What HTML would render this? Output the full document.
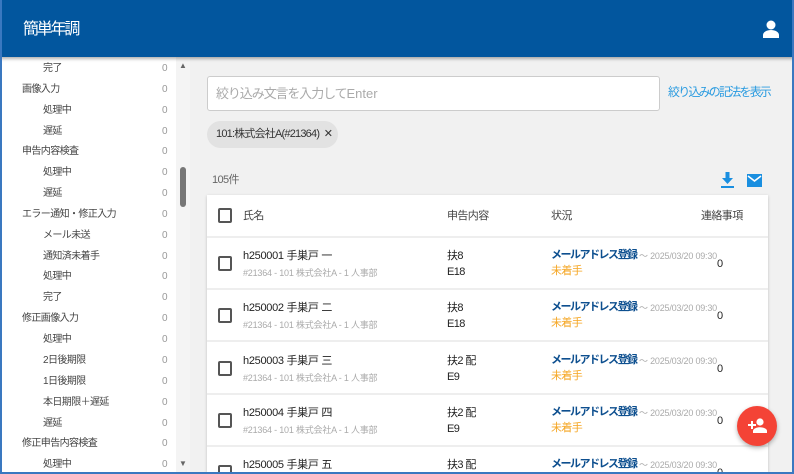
<!DOCTYPE html><html><head><meta charset="utf-8"><style>
*{box-sizing:border-box;margin:0;padding:0}
html,body{width:794px;height:474px;overflow:hidden}
body{font-family:"Liberation Sans","Noto Sans CJK JP",sans-serif;background:#f1f1f1;position:relative;letter-spacing:-0.6px;line-height:13px}
.frame{position:absolute;left:0;top:0;width:794px;height:474px;border:2px solid #3a78c0;border-top:none;pointer-events:none;z-index:20}
.hdr{position:absolute;left:0;top:0;width:794px;height:57px;background:#02569e;box-shadow:0 2px 3px rgba(0,0,0,.3);z-index:5}
.hdr .t{position:absolute;left:23px;top:21px;color:#fff;font-size:16px;letter-spacing:-2.2px;line-height:18px}
.side{position:absolute;left:0;top:57px;width:190px;height:415px;background:#fff;overflow:hidden}
.it{position:absolute;font-size:10px;color:#444;white-space:nowrap;line-height:12px}
.c{position:absolute;left:162px;font-size:10px;color:#999;line-height:12px}
.track{position:absolute;left:176px;top:57px;width:14px;height:415px;background:#f4f4f4}
.thumb{position:absolute;left:180px;top:167px;width:6px;height:40px;background:#777;border-radius:3px}
.ar{position:absolute;left:179px;font-size:8px;line-height:8px;color:#666}
.srch{position:absolute;left:207px;top:76px;width:453px;height:35px;background:#fff;border:1px solid #ccc;border-radius:3px;font-size:13px;color:#aaa;padding:10px 8px;letter-spacing:-1.1px;line-height:14px}
.srch span{letter-spacing:0}
.lnk{position:absolute;left:668px;top:86px;font-size:12px;color:#2a9be0;letter-spacing:-1.8px;white-space:nowrap}
.chip{position:absolute;left:207px;top:121px;width:131px;height:27px;background:#e2e2e2;border-radius:14px;font-size:11px;color:#333;padding:7px 9px;white-space:nowrap;letter-spacing:-0.8px}
.cnt{position:absolute;left:212px;top:174px;font-size:11px;color:#666}
.card{position:absolute;left:207px;top:195px;width:561px;height:277px;background:#fff;box-shadow:0 1px 3px rgba(0,0,0,.2);overflow:hidden}
.row{position:absolute;left:0;width:561px;border-bottom:2px solid #eee}
.cb{position:absolute;left:11px;width:14px;height:15px;border:2px solid #555;border-radius:2px}
.tx{position:absolute;white-space:nowrap;line-height:13px}
.fab{position:absolute;left:737px;top:406px;width:40px;height:40px;border-radius:50%;background:#f44336;box-shadow:0 2px 5px rgba(0,0,0,.3);z-index:10}
</style></head><body>
<div class="hdr"><div class="t">簡単年調</div>
<svg style="position:absolute;left:763px;top:20px" width="16" height="18" viewBox="0 0 16 18"><circle cx="8" cy="5" r="4.5" fill="#fff"/><path d="M0 18v-3c0-3 4-5 8-5s8 2 8 5v3z" fill="#fff"/></svg></div>
<div class="side">
<div class="it" style="left:43px;top:6px">完了</div><div class="c" style="top:6px">0</div>
<div class="it" style="left:22px;top:27px">画像入力</div><div class="c" style="top:27px">0</div>
<div class="it" style="left:43px;top:48px">処理中</div><div class="c" style="top:48px">0</div>
<div class="it" style="left:43px;top:69px">遅延</div><div class="c" style="top:69px">0</div>
<div class="it" style="left:22px;top:89px">申告内容検査</div><div class="c" style="top:89px">0</div>
<div class="it" style="left:43px;top:110px">処理中</div><div class="c" style="top:110px">0</div>
<div class="it" style="left:43px;top:131px">遅延</div><div class="c" style="top:131px">0</div>
<div class="it" style="left:22px;top:152px">エラー通知・修正入力</div><div class="c" style="top:152px">0</div>
<div class="it" style="left:43px;top:173px">メール未送</div><div class="c" style="top:173px">0</div>
<div class="it" style="left:43px;top:194px">通知済未着手</div><div class="c" style="top:194px">0</div>
<div class="it" style="left:43px;top:214px">処理中</div><div class="c" style="top:214px">0</div>
<div class="it" style="left:43px;top:235px">完了</div><div class="c" style="top:235px">0</div>
<div class="it" style="left:22px;top:256px">修正画像入力</div><div class="c" style="top:256px">0</div>
<div class="it" style="left:43px;top:277px">処理中</div><div class="c" style="top:277px">0</div>
<div class="it" style="left:43px;top:298px">2日後期限</div><div class="c" style="top:298px">0</div>
<div class="it" style="left:43px;top:319px">1日後期限</div><div class="c" style="top:319px">0</div>
<div class="it" style="left:43px;top:340px">本日期限＋遅延</div><div class="c" style="top:340px">0</div>
<div class="it" style="left:43px;top:361px">遅延</div><div class="c" style="top:361px">0</div>
<div class="it" style="left:22px;top:381px">修正申告内容検査</div><div class="c" style="top:381px">0</div>
<div class="it" style="left:43px;top:402px">処理中</div><div class="c" style="top:402px">0</div>
</div>
<div class="track"></div><div class="thumb"></div>
<div class="ar" style="top:62px">▲</div>
<div class="ar" style="top:460px">▼</div>
<div class="srch">絞り込み文言を入力して<span>Enter</span></div>
<div class="lnk">絞り込みの記法を表示</div>
<div class="chip">101:株式会社A(#21364) &nbsp;✕</div>
<div class="cnt">105件</div>
<svg style="position:absolute;left:721px;top:172px" width="13" height="16" viewBox="0 0 13 16"><path d="M4.5 0h4v6h3.5l-5.5 6-5.5-6h3.5z" fill="#1a8fe0"/><rect x="0" y="14" width="13" height="2" fill="#1a8fe0"/></svg>
<svg style="position:absolute;left:747px;top:174px" width="15" height="13" viewBox="0 0 15 13"><rect width="15" height="13" fill="#1a8fe0"/><path d="M1 2l6.5 5 6.5-5" stroke="#fff" stroke-width="1.6" fill="none"/></svg>
<div class="card">
<div class="row" style="top:0;height:43px"><div class="cb" style="top:13px"></div>
<div class="tx" style="left:36px;top:15px;font-size:11px;color:#444">氏名</div>
<div class="tx" style="left:240px;top:15px;font-size:11px;color:#444">申告内容</div>
<div class="tx" style="left:344px;top:15px;font-size:11px;color:#444">状況</div>
<div class="tx" style="left:494px;top:15px;font-size:11px;color:#444">連絡事項</div></div>
</div>
<script>
var n=["一","二","三","四","五"],k=["扶8","扶8","扶2 配","扶2 配","扶3 配"],e=["E18","E18","E9","E9","E9"],h="";
for(var i=0;i<5;i++){var t=238+i*52.3-195;
h+='<div class="row" style="top:'+t+'px;height:52px"><div class="cb" style="top:18px"></div>'+
'<div class="tx" style="left:36px;top:12px;font-size:11px;color:#222;letter-spacing:-0.3px">h25000'+(i+1)+' 手巣戸 '+n[i]+'</div>'+
'<div class="tx" style="left:36px;top:29px;font-size:9px;color:#aaa;letter-spacing:-0.2px">#21364 - 101 株式会社A - 1 人事部</div>'+
'<div class="tx" style="left:240px;top:12px;font-size:11px;color:#222">'+k[i]+'</div>'+
'<div class="tx" style="left:240px;top:28px;font-size:11px;color:#222">'+e[i]+'</div>'+
'<div class="tx" style="left:344px;top:11px;font-size:11px;color:#0d4f8f;font-weight:bold;letter-spacing:-1.5px">メールアドレス登録</div>'+
'<div class="tx" style="left:432px;top:12px;font-size:9px;color:#aaa;letter-spacing:-0.2px">～ 2025/03/20 09:30</div>'+
'<div class="tx" style="left:344px;top:27px;font-size:11px;color:#f5a623">未着手</div>'+
'<div class="tx" style="left:510px;top:20px;font-size:11px;color:#222">0</div></div>';}
document.querySelector('.card').innerHTML+=h;
</script>
<div class="fab"><svg style="position:absolute;left:11px;top:12px" width="19" height="15" viewBox="0 0 19 15"><path d="M0 6h3V3h2v3h3v2H5v3H3V8H0z" fill="#fff"/><circle cx="12" cy="4" r="3.6" fill="#fff"/><path d="M5 15v-2c0-2.5 4-3.8 7-3.8s7 1.3 7 3.8v2z" fill="#fff"/></svg></div>
<div class="frame"></div>
</body></html>
